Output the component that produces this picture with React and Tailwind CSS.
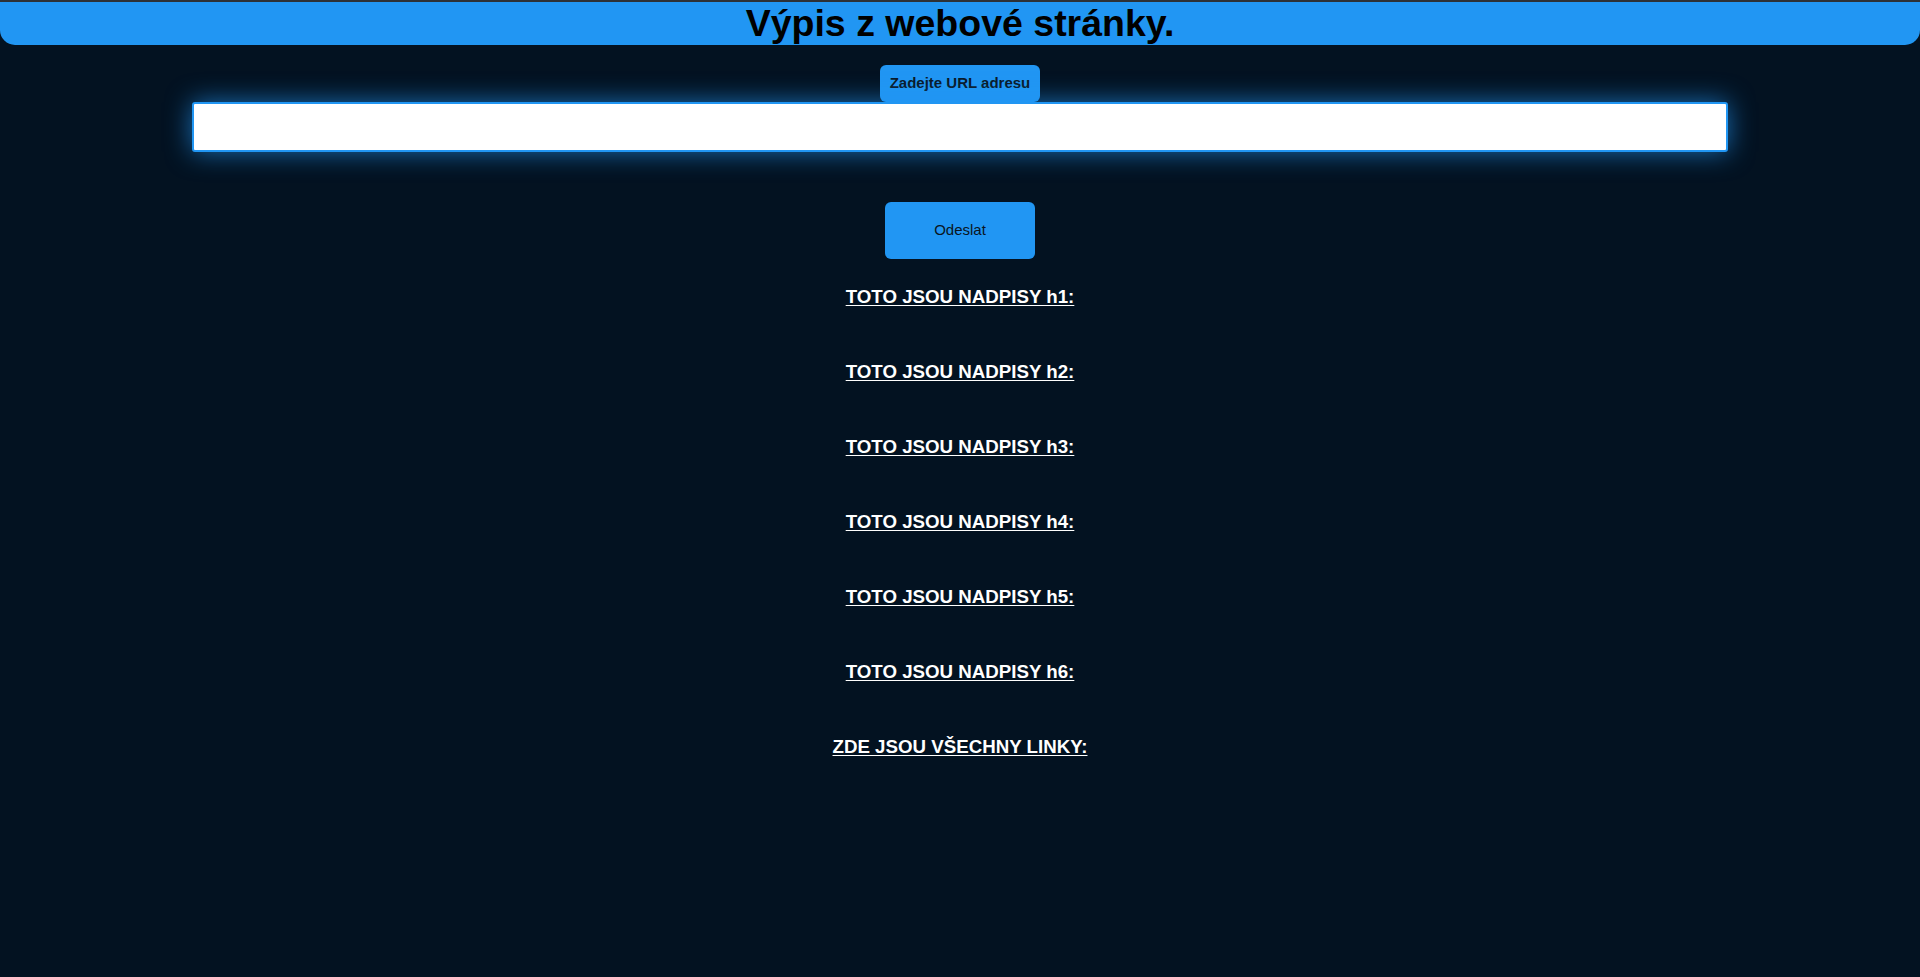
import { useState } from 'react'

const sections = [
  'TOTO JSOU NADPISY h1:',
  'TOTO JSOU NADPISY h2:',
  'TOTO JSOU NADPISY h3:',
  'TOTO JSOU NADPISY h4:',
  'TOTO JSOU NADPISY h5:',
  'TOTO JSOU NADPISY h6:',
  'ZDE JSOU VŠECHNY LINKY:',
]

function App() {
  const [url, setUrl] = useState('')

  return (
    <div className="min-h-[977px] bg-[#031221] font-['Liberation_Sans',Arial,sans-serif] border-t-2 border-[#2d3136]">
      <header className="h-[43px] bg-[#2196f3] rounded-b-[15px] flex justify-center">
        <h1 className="text-[37.5px] font-bold leading-[43px] text-black">Výpis z webové stránky.</h1>
      </header>

      <form className="flex flex-col items-center pt-[20px]" onSubmit={(e) => e.preventDefault()}>
        <label
          htmlFor="url"
          className="bg-[#2196f3] text-[#0a1826] text-[15px] font-bold rounded-[6px] h-[37px] px-[10px] flex items-center"
        >
          Zadejte URL adresu
        </label>
        <input
          id="url"
          value={url}
          onChange={(e) => setUrl(e.target.value)}
          className="w-[1536px] h-[50px] bg-white border-2 border-[#2196f3] rounded-[3px] shadow-[0_0_26px_rgba(33,150,243,0.7)] outline-none px-2"
        />
        <button
          type="submit"
          className="mt-[50px] w-[150px] h-[57px] bg-[#2196f3] rounded-[6px] text-[15px] text-[#0a1522]"
        >
          Odeslat
        </button>
      </form>

      <div className="flex flex-col items-center gap-[54px] pt-[27px]">
        {sections.map((s) => (
          <h3 key={s} className="text-[18.72px] font-bold leading-[21px] text-white underline underline-offset-[2px]">
            {s}
          </h3>
        ))}
      </div>
    </div>
  )
}

export default App
